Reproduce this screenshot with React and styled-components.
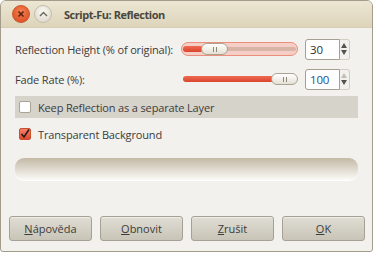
import React from "react";
import styled, { createGlobalStyle } from "styled-components";

const GlobalStyle = createGlobalStyle`
  body {
    margin: 0;
    background: #ffffff;
    font-family: "Open Sans", "DejaVu Sans", sans-serif;
  }
`;

const Window = styled.div`
  width: 373px;
  height: 252px;
  box-sizing: border-box;
  border: 1px solid #a49c8a;
  border-radius: 6px 6px 3px 3px;
  background: #f2f1ed;
  display: flex;
  flex-direction: column;
  overflow: hidden;
  color: #3c3c3c;
  font-size: 11px;
  letter-spacing: -0.15px;
`;

const TitleBar = styled.div`
  height: 26px;
  flex: none;
  display: flex;
  align-items: center;
  padding-left: 11px;
  gap: 4px;
  background: linear-gradient(#ece6d3, #ddd4ba);
  border-bottom: 1px solid #d6cdb3;
`;

const CircleButton = styled.div`
  width: 16px;
  height: 16px;
  border-radius: 50%;
  display: flex;
  align-items: center;
  justify-content: center;
  background: ${(p) =>
    p.$close
      ? "radial-gradient(circle at 50% 35%, #f4814f, #d8461c)"
      : "radial-gradient(circle at 50% 35%, #faf8f3, #d9d4c6)"};
  border: 1px solid ${(p) => (p.$close ? "#c9542c" : "#c4bca8")};
`;

const Title = styled.div`
  margin-left: 8px;
  font-weight: bold;
  font-size: 11px;
  letter-spacing: -0.45px;
  color: #4a473e;
`;

const Body = styled.div`
  flex: 1;
  padding: 10px 14px 0 14px;
  display: flex;
  flex-direction: column;
`;

const ParamGrid = styled.div`
  display: grid;
  grid-template-columns: 166px 117px 52px;
  row-gap: 8px;
  align-items: center;
`;

const Label = styled.div`
  white-space: nowrap;
`;

const Slider = styled.div`
  position: relative;
  height: 22px;
  display: flex;
  align-items: center;
`;

const Trough = styled.div`
  position: relative;
  width: 100%;
  height: 14px;
  box-sizing: border-box;
  border-radius: 7px;
  background: ${(p) => (p.$hover ? "#f5cfc6" : "transparent")};
  border: 1px solid ${(p) => (p.$hover ? "#ec8e7c" : "transparent")};
  display: flex;
  align-items: center;
  padding: 0 1px;
`;

const Track = styled.div`
  flex: 1;
  height: 4px;
  border-radius: 2px;
  background: ${(p) => (p.$hover ? "#d7b4a6" : "transparent")};
  position: relative;
`;

const Fill = styled.div`
  position: absolute;
  left: 0;
  top: -1px;
  height: 6px;
  border-radius: 3px;
  background: linear-gradient(#ef6a52, #d9442c);
`;

const Thumb = styled.div`
  position: absolute;
  top: 50%;
  width: 27px;
  height: 12px;
  margin-top: -6px;
  box-sizing: border-box;
  border-radius: 6px;
  border: 1px solid #aaa391;
  background: linear-gradient(#ffffff, #e4e0d6);
  display: flex;
  align-items: center;
  justify-content: center;
  gap: 2px;
  &::before,
  &::after {
    content: "";
    width: 1px;
    height: 5px;
    background: #8d877a;
  }
`;

const Spin = styled.div`
  margin-left: 7px;
  display: flex;
  height: 21px;
`;

const Entry = styled.div`
  width: 39px;
  box-sizing: border-box;
  border: 1px solid #a59f92;
  border-radius: 3px 0 0 3px;
  background: #ffffff;
  padding-left: 4px;
  display: flex;
  align-items: center;
  font-size: 11.5px;
  color: ${(p) => (p.$active ? "#234f8a" : "#2f2f2f")};
`;

const Arrows = styled.div`
  width: 12px;
  box-sizing: border-box;
  border: 1px solid #d3cec4;
  border-left: none;
  border-radius: 0 3px 3px 0;
  display: flex;
  flex-direction: column;
  align-items: center;
  justify-content: space-around;
  padding: 2px 0;
`;

const Arrow = styled.div`
  width: 0;
  height: 0;
  border-left: 3px solid transparent;
  border-right: 3px solid transparent;
  ${(p) =>
    p.$up
      ? `border-bottom: 5px solid ${p.$disabled ? "#c3beb3" : "#54524c"};`
      : `border-top: 5px solid ${p.$disabled ? "#c3beb3" : "#54524c"};`}
`;

const CheckRow = styled.div`
  height: 22px;
  display: flex;
  align-items: center;
  gap: 7px;
  padding-left: 4px;
  margin-top: ${(p) => p.$top}px;
  background: ${(p) => (p.$hover ? "#d6d3cb" : "transparent")};
`;

const Box = styled.div`
  width: 12px;
  height: 12px;
  box-sizing: border-box;
  border-radius: 2px;
  border: 1px solid ${(p) => (p.$checked ? "#c8502f" : "#a9a394")};
  background: ${(p) =>
    p.$checked ? "linear-gradient(#f7806a, #e0482e)" : "#ffffff"};
  display: flex;
  align-items: center;
  justify-content: center;
`;

const Progress = styled.div`
  margin-top: 13px;
  height: 22px;
  border-radius: 9px;
  background: linear-gradient(#c3b9a6, #e2ddd2 55%, #fbfaf7);
  box-shadow: 0 1px 0 #ffffff;
`;

const Footer = styled.div`
  margin-top: auto;
  padding: 0 8px 10px 8px;
  display: grid;
  grid-template-columns: repeat(4, 83px);
  column-gap: 8px;
`;

const Button = styled.button`
  height: 25px;
  border: 1px solid #a6a194;
  border-radius: 3px;
  background: linear-gradient(#e0ddd4, #c8c4b7);
  box-shadow: inset 0 1px 0 #efede7;
  font-family: "Open Sans", "DejaVu Sans", sans-serif;
  font-size: 11px;
  color: #3c3c3c;
  padding: 0;
  u {
    text-decoration: underline;
  }
`;

const sliders = [
  { label: "Reflection Height (% of original):", value: 30, pos: 19, fill: 20, hover: true, active: false },
  { label: "Fade Rate (%):", value: 100, pos: 89, fill: 92, hover: false, active: true },
];

function ParamRow({ label, value, pos, fill, hover, active }) {
  return (
    <>
      <Label>{label}</Label>
      <Slider>
        <Trough $hover={hover}>
          <Track $hover={hover}>
            <Fill style={{ width: fill }} />
          </Track>
          <Thumb style={{ left: pos }} />
        </Trough>
      </Slider>
      <Spin>
        <Entry $active={active}>{value}</Entry>
        <Arrows>
          <Arrow $up $disabled={value >= 100} />
          <Arrow />
        </Arrows>
      </Spin>
    </>
  );
}

export default function App() {
  return (
    <>
      <GlobalStyle />
      <Window>
        <TitleBar>
          <CircleButton $close>
            <svg width="8" height="8" viewBox="0 0 8 8">
              <path d="M1.5 1.5 L6.5 6.5 M6.5 1.5 L1.5 6.5" stroke="#5a2412" strokeWidth="1.6" />
            </svg>
          </CircleButton>
          <CircleButton>
            <svg width="9" height="6" viewBox="0 0 9 6">
              <path d="M1 5 L4.5 1.5 L8 5" stroke="#6b665a" strokeWidth="1.4" fill="none" />
            </svg>
          </CircleButton>
          <Title>Script-Fu: Reflection</Title>
        </TitleBar>
        <Body>
          <ParamGrid>
            {sliders.map((s) => (
              <ParamRow key={s.label} {...s} />
            ))}
          </ParamGrid>
          <CheckRow $hover $top={6}>
            <Box />
            <span>Keep Reflection as a separate Layer</span>
          </CheckRow>
          <CheckRow $top={5}>
            <Box $checked>
              <svg width="10" height="10" viewBox="0 0 10 10">
                <path d="M1.5 5 L4 8 L9 0.5" stroke="#2a1a14" strokeWidth="1.6" fill="none" />
              </svg>
            </Box>
            <span>Transparent Background</span>
          </CheckRow>
          <Progress />
        </Body>
        <Footer>
          <Button><u>N</u>ápověda</Button>
          <Button><u>O</u>bnovit</Button>
          <Button><u>Z</u>rušit</Button>
          <Button><u>O</u>K</Button>
        </Footer>
      </Window>
    </>
  );
}
